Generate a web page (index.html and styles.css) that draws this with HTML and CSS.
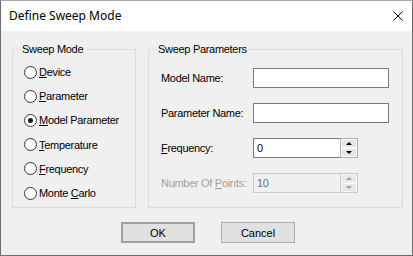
FILE: index.html
```html
<!DOCTYPE html>
<html>
<head>
<meta charset="utf-8">
<link rel="stylesheet" href="styles.css">
</head>
<body>
<div class="window">
  <div class="titlebar">
    <span class="title">Define Sweep Mode</span>
    <svg class="close" width="10" height="10" viewBox="0 0 10 10"><path d="M0.5 0.5 L9.5 9.5 M9.5 0.5 L0.5 9.5" stroke="#000" stroke-width="1" fill="none"/></svg>
  </div>
  <div class="content">
    <div class="groups">
      <div class="group mode">
        <div class="legend">Sweep Mode</div>
        <div class="radios">
          <div class="radio"><span class="dot"></span><span><u>D</u>evice</span></div>
          <div class="radio"><span class="dot"></span><span><u>P</u>arameter</span></div>
          <div class="radio"><span class="dot checked"></span><span><u>M</u>odel Parameter</span></div>
          <div class="radio"><span class="dot"></span><span><u>T</u>emperature</span></div>
          <div class="radio"><span class="dot"></span><span><u>F</u>requency</span></div>
          <div class="radio"><span class="dot"></span><span>Monte <u>C</u>arlo</span></div>
        </div>
      </div>
      <div class="group params">
        <div class="legend">Sweep Parameters</div>
        <div class="form">
          <div class="row"><span class="lbl">Model Name:</span><span class="box"></span></div>
          <div class="row"><span class="lbl">Parameter Name:</span><span class="box"></span></div>
          <div class="row"><span class="lbl"><u>F</u>requency:</span>
            <span class="num"><span class="numtext">0</span><span class="spin"><span class="sb"><i class="up"></i></span><span class="sb"><i class="down"></i></span></span></span>
          </div>
          <div class="row disabled"><span class="lbl">Number Of <u>P</u>oints:</span>
            <span class="num"><span class="numtext">10</span><span class="spin"><span class="sb"><i class="up"></i></span><span class="sb"><i class="down"></i></span></span></span>
          </div>
        </div>
      </div>
    </div>
    <div class="buttons">
      <div class="btn default">OK</div>
      <div class="btn">Cancel</div>
    </div>
  </div>
</div>
</body>
</html>
```
FILE: styles.css
```css
* { box-sizing: border-box; }
html, body { margin: 0; padding: 0; }
body { width: 413px; height: 256px; overflow: hidden; background: #f0f0f0; }
.window {
  width: 413px; height: 256px;
  border: 1px solid #6e6e6e;
  border-top-color: #a8a8a8;
  background: #f0f0f0;
  display: flex; flex-direction: column;
  font-family: "Liberation Sans", Arial, sans-serif;
  font-size: 11px; letter-spacing: -0.3px; color: #000;
}
.titlebar {
  height: 30px; background: #fff; flex: none;
  display: flex; align-items: center; justify-content: space-between;
  padding: 0 9px 0 8px;
}
.title { font-family: "Noto Sans", "Open Sans", sans-serif; font-size: 12px; letter-spacing: 0; color: #000; margin-top: -2px; }
.close { margin-top: -1px; }
.content { flex: 1; padding: 18px 9px 0 11px; display: flex; flex-direction: column; }
.groups { display: flex; gap: 12px; height: 159px; flex: none; }
.group { border: 1px solid #dcdcdc; height: 159px; }
.mode { width: 124px; padding-left: 8px; }
.params { width: 255px; padding-left: 8px; }
.legend {
  display: block; width: max-content; background: #f0f0f0;
  height: 13px; line-height: 13px; margin-top: -7px; padding: 0 1px;
}
.radios { margin-top: 4px; margin-left: 3px; }
.radio { height: 24.2px; display: flex; align-items: center; gap: 2px; }
.dot {
  width: 13px; height: 13px; border-radius: 50%;
  border: 1px solid #333; background: #fff; position: relative; flex: none;
}
.dot.checked::after {
  content: ""; position: absolute; left: 3px; top: 3px; width: 5px; height: 5px;
  border-radius: 50%; background: #1a1a1a;
}
.form { margin-top: 12px; margin-left: 4px; display: flex; flex-direction: column; gap: 15px; }
.row { display: flex; align-items: center; height: 20px; }
.lbl { width: 92px; flex: none; }
.box { width: 136px; height: 20px; background: #fff; border: 1px solid #7a7a7a; }
.num { display: flex; height: 20px; }
.numtext {
  width: 87px; height: 20px; background: #fff;
  border: 1px solid #7a7a7a; border-right: none;
  padding-left: 3px; line-height: 18px;
}
.spin { width: 18px; height: 20px; border: 1px solid #adadad; display: flex; flex-direction: column; background: #fff; }
.sb { flex: 1; background: #e6e6e6; border: 1px solid #fafafa; display: flex; align-items: center; justify-content: center; }
.sb i { display: block; width: 0; height: 0; border-left: 3px solid transparent; border-right: 3px solid transparent; }
.sb i.up { border-bottom: 3px solid #000; }
.sb i.down { border-top: 3px solid #000; }
.disabled .lbl { color: #a0a0a0; }
.disabled .numtext { background: #f0f0f0; border-color: #cccccc; color: #6d6d6d; }
.disabled .spin { border-color: #cccccc; background: #f0f0f0; }
.disabled .sb { background: #e8e8e8; border-color: #f4f4f4; }
.disabled .sb i.up { border-bottom-color: #a0a0a0; }
.disabled .sb i.down { border-top-color: #a0a0a0; }
.buttons { display: flex; margin-top: 14px; padding-left: 109px; gap: 26px; }
.btn {
  width: 74px; height: 21px; background: #e1e1e1; border: 1px solid #adadad;
  display: flex; align-items: center; justify-content: center; letter-spacing: 0;
}
.btn.default { border: 2px solid #a0a0a0; }
```
